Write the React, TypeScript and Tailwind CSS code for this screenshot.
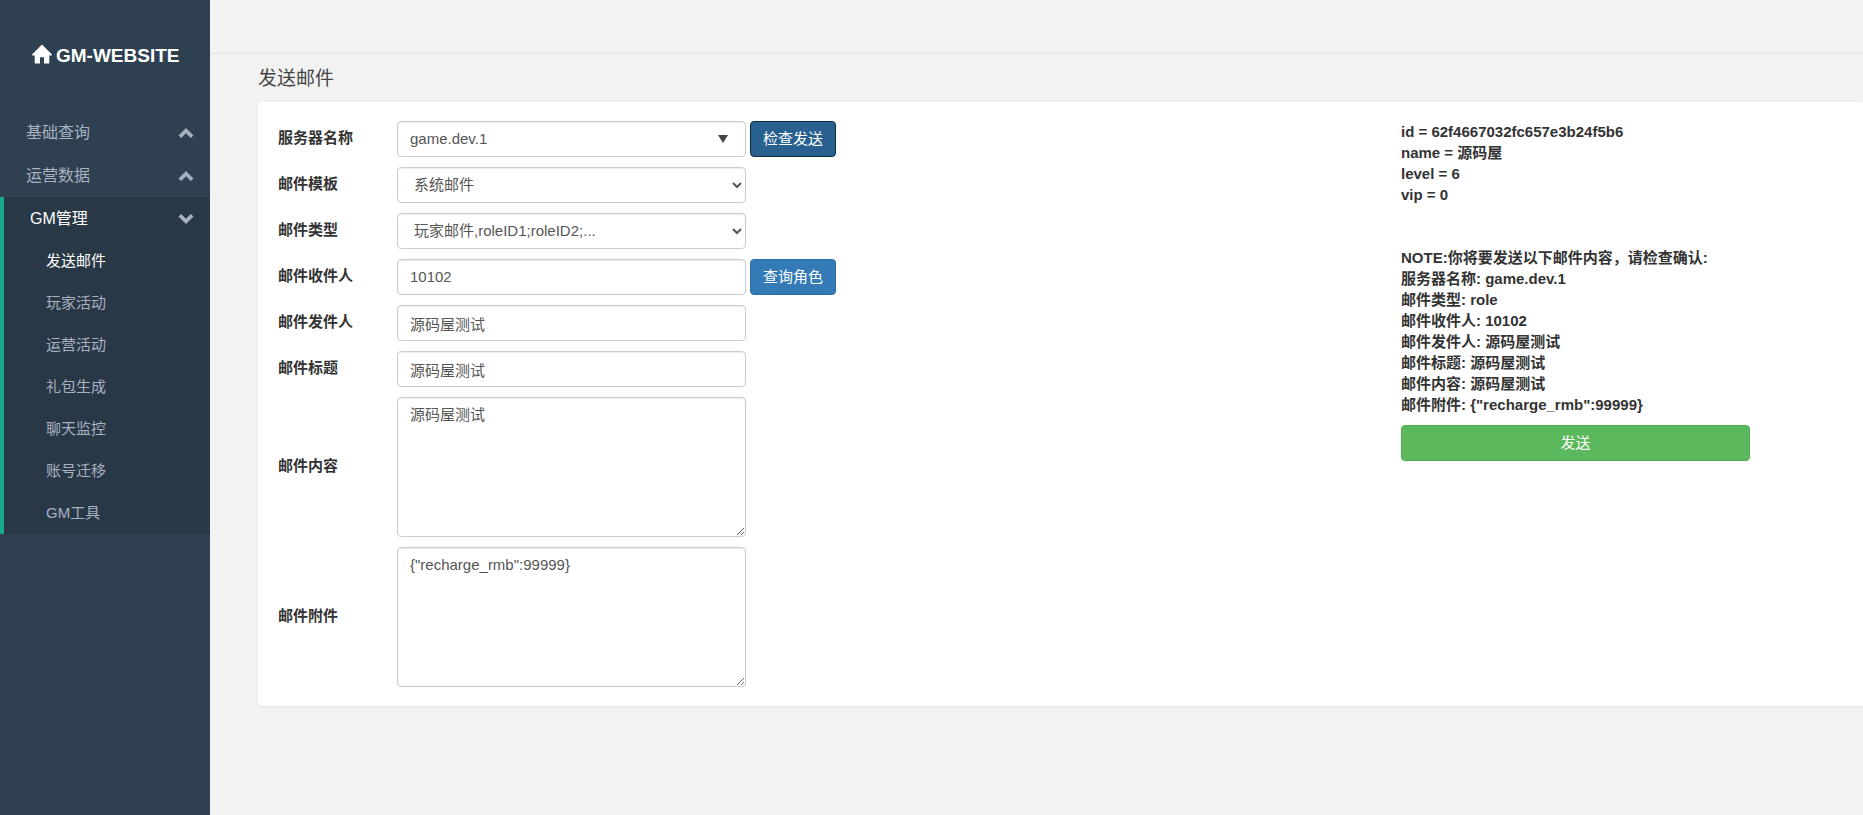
import type { ReactNode } from "react";

const menus = [
  { label: "基础查询", open: false, items: [] as string[] },
  { label: "运营数据", open: false, items: [] as string[] },
  {
    label: "GM管理",
    open: true,
    items: ["发送邮件", "玩家活动", "运营活动", "礼包生成", "聊天监控", "账号迁移", "GM工具"],
  },
];

const roleInfo = ["id = 62f4667032fc657e3b24f5b6", "name = 源码屋", "level = 6", "vip = 0"];

const mailInfo = [
  "NOTE:你将要发送以下邮件内容，请检查确认:",
  "服务器名称: game.dev.1",
  "邮件类型: role",
  "邮件收件人: 10102",
  "邮件发件人: 源码屋测试",
  "邮件标题: 源码屋测试",
  "邮件内容: 源码屋测试",
  '邮件附件: {"recharge_rmb":99999}',
];

const control =
  "w-[349px] shrink-0 rounded border border-[#ccc] bg-white px-3 text-[15px] leading-[21px] text-[#555] shadow-[inset_0_1px_1px_rgba(0,0,0,0.075)] outline-none";

function Chevron({ down }: { down: boolean }) {
  return (
    <svg
      viewBox="0 0 16 12"
      className={down ? "h-3 w-4 rotate-180" : "h-3 w-4"}
      fill="currentColor"
      aria-hidden="true"
    >
      <path d="M8 1 15.5 8.4 12.8 11 8 6.3 3.2 11 .5 8.4Z" />
    </svg>
  );
}

function Sidebar() {
  return (
    <aside className="w-[210px] shrink-0 bg-[#2f4050] text-[#a7b1c2]">
      <a href="#" className="flex h-[111px] items-start gap-1 pl-8 pt-11 text-white">
        <svg viewBox="0 0 20 20" className="h-5 w-5" fill="currentColor" aria-hidden="true">
          <path d="M10 .4 20 10.6 19.6 11.4H17.3V19.6H12V13.2H8V19.6H2.7V11.4H.4L0 10.6Z" />
        </svg>
        <span className="text-[19px] font-bold leading-6">GM-WEBSITE</span>
      </a>
      <nav>
        <ul>
          {menus.map((menu) => (
            <li
              key={menu.label}
              className={menu.open ? "border-l-4 border-[#19aa8d] bg-[#293846]" : ""}
            >
              <a
                href="#"
                className="flex h-[43px] items-center justify-between pl-[26px] pr-4 text-base"
              >
                <span className={menu.open ? "text-white" : ""}>{menu.label}</span>
                <Chevron down={menu.open} />
              </a>
              {menu.open && (
                <ul>
                  {menu.items.map((item, i) => (
                    <li key={item}>
                      <a
                        href="#"
                        className={`flex h-[42px] items-center pb-0.5 pl-[42px] text-[15px] ${i === 0 ? "text-white" : ""}`}
                      >
                        {item}
                      </a>
                    </li>
                  ))}
                </ul>
              )}
            </li>
          ))}
        </ul>
      </nav>
    </aside>
  );
}

function Field({ id, label, children }: { id: string; label: string; children: ReactNode }) {
  return (
    <div className="flex items-center">
      <label htmlFor={id} className="w-[119px] shrink-0 pb-1 font-bold text-[#333]">
        {label}
      </label>
      {children}
    </div>
  );
}

function MailForm() {
  return (
    <form className="flex flex-1 flex-col gap-2.5">
      <Field id="server" label="服务器名称">
        <div className="relative">
          <select id="server" className={`${control} h-9 appearance-none pb-0.5`}>
            <option>game.dev.1</option>
          </select>
          <svg
            viewBox="0 0 10 8"
            className="pointer-events-none absolute right-[18px] top-3.5 h-2 w-2.5"
            fill="#444"
            aria-hidden="true"
          >
            <path d="M0 0H10L5 8Z" />
          </svg>
        </div>
        <button
          type="button"
          className="ml-1 h-9 rounded border border-[#122b40] bg-[#286090] px-3 pb-0.5 text-white"
        >
          检查发送
        </button>
      </Field>
      <Field id="template" label="邮件模板">
        <select id="template" className={`${control} h-9 pb-0.5`}>
          <option>系统邮件</option>
        </select>
      </Field>
      <Field id="type" label="邮件类型">
        <select id="type" className={`${control} h-9 pb-0.5`}>
          <option>玩家邮件,roleID1;roleID2;...</option>
        </select>
      </Field>
      <Field id="receiver" label="邮件收件人">
        <input id="receiver" defaultValue="10102" className={`${control} h-9 pb-0.5`} />
        <button
          type="button"
          className="ml-1 h-9 rounded border border-[#2e6da4] bg-[#337ab7] px-3 pb-0.5 text-white"
        >
          查询角色
        </button>
      </Field>
      <Field id="sender" label="邮件发件人">
        <input id="sender" defaultValue="源码屋测试" className={`${control} h-9`} />
      </Field>
      <Field id="title" label="邮件标题">
        <input id="title" defaultValue="源码屋测试" className={`${control} h-9`} />
      </Field>
      <Field id="content" label="邮件内容">
        <textarea
          id="content"
          defaultValue="源码屋测试"
          className={`${control} h-[140px] resize py-1.5`}
        />
      </Field>
      <Field id="attachment" label="邮件附件">
        <textarea
          id="attachment"
          defaultValue={'{"recharge_rmb":99999}'}
          className={`${control} h-[140px] resize py-1.5`}
        />
      </Field>
    </form>
  );
}

function Preview() {
  return (
    <section className="w-[462px] shrink-0 font-bold text-[#333]">
      {roleInfo.map((line) => (
        <p key={line}>{line}</p>
      ))}
      <div className="mt-[42px]">
        {mailInfo.map((line) => (
          <p key={line}>{line}</p>
        ))}
      </div>
      <button
        type="button"
        className="mt-2.5 h-9 w-[349px] rounded border border-[#4cae4c] bg-[#5cb85c] pb-0.5 font-normal text-white"
      >
        发送
      </button>
    </section>
  );
}

export default function App() {
  return (
    <div className="flex min-h-screen bg-[#f2f2f2] font-['Liberation_Sans','Noto_Sans_CJK_SC',sans-serif] text-[15px] leading-[21px]">
      <Sidebar />
      <div className="min-w-0 flex-1">
        <header className="h-[54px] border-b border-[#e4e7ea] bg-[#f3f3f4]" />
        <main className="pl-12">
          <h1 className="flex h-12 items-center text-[19px] text-[#444]">发送邮件</h1>
          <div className="flex rounded-l bg-white py-[19px] pl-5 shadow-[0_1px_2px_rgba(0,0,0,0.08)]">
            <MailForm />
            <Preview />
          </div>
        </main>
      </div>
    </div>
  );
}
